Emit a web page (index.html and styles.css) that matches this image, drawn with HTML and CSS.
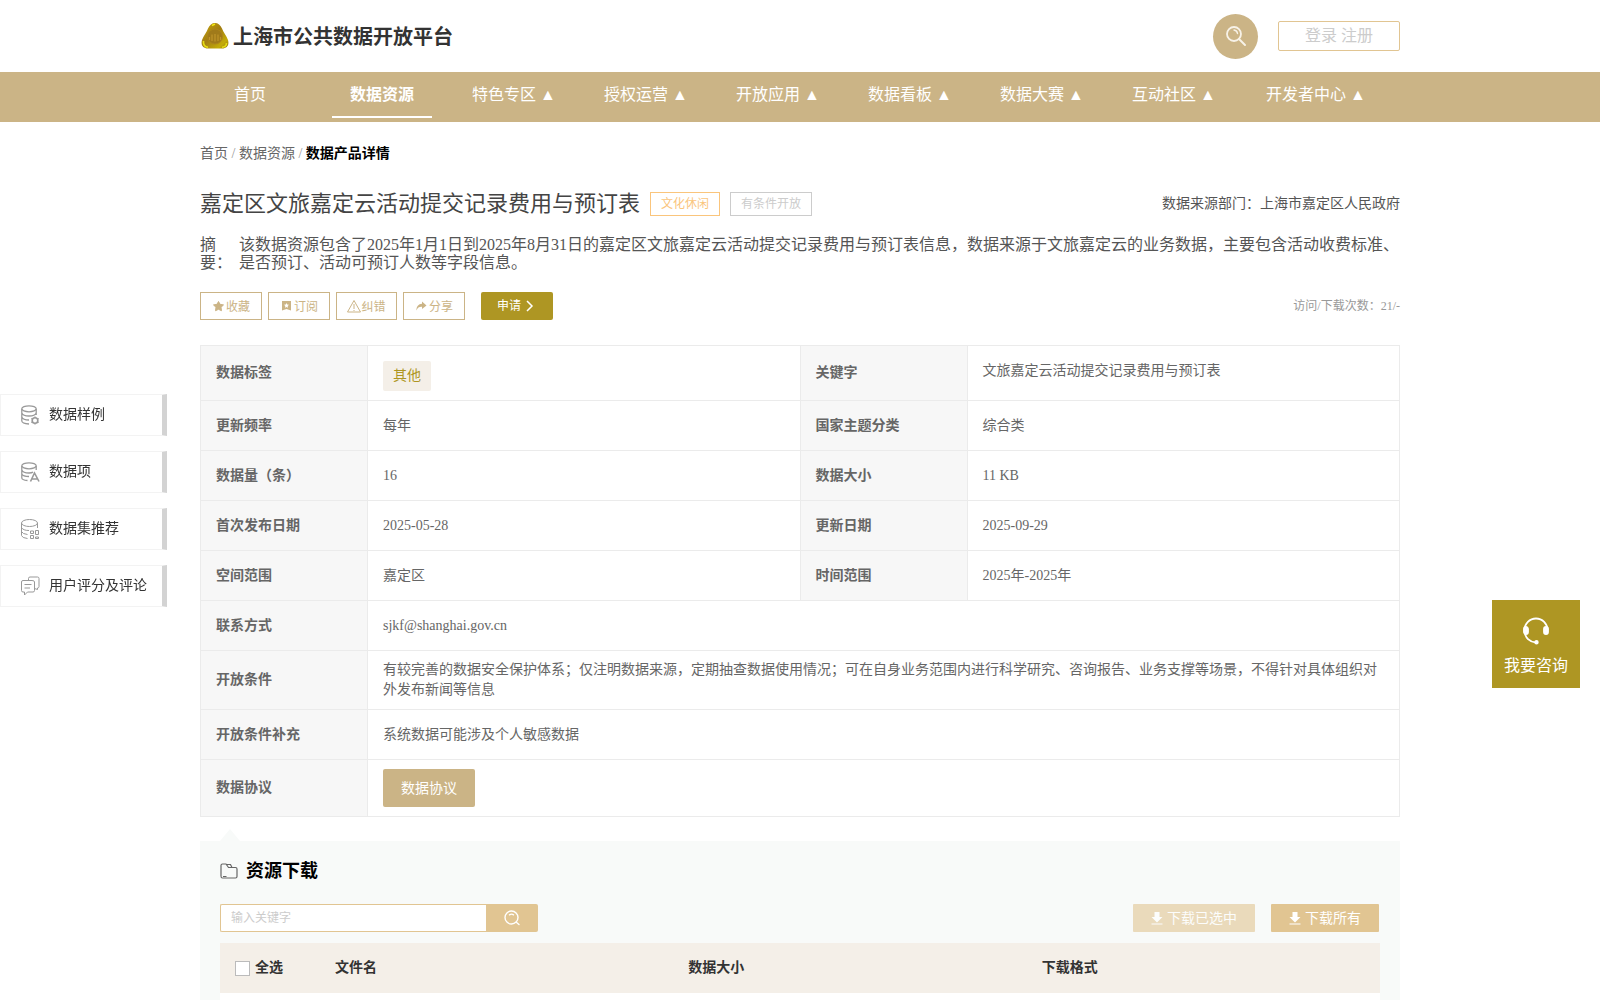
FILE: index.html
```html
<!DOCTYPE html>
<html lang="zh-CN">
<head>
    <meta charset="UTF-8">
    <meta name="viewport" content="width=device-width, initial-scale=1.0">
    <title>上海市公共数据开放平台</title>
    <link rel="stylesheet" href="styles.css">
</head>
<body>
    <header class="header container">
        <a class="logo" href="#">
            <svg class="logo-icon" width="28" height="26" viewBox="0 0 28 26">
                <defs>
                    <linearGradient id="gold" x1="0" y1="0" x2="1" y2="1">
                        <stop offset="0" stop-color="#c9a80c"/>
                        <stop offset="0.45" stop-color="#a27d12"/>
                        <stop offset="0.8" stop-color="#c4ac08"/>
                        <stop offset="1" stop-color="#8a6a10"/>
                    </linearGradient>
                </defs>
                <path d="M14 0C17 0 19.500 2 21 5.500C22.500 9.500 25.500 13 27 17C28.500 22 26 25.500 21 25.500H7C2 25.500-.5 22 1 17C2.500 13 5.500 9.500 7 5.500C8.500 2 11 0 14 0Z" fill="url(#gold)"/>
                <path d="M2.500 18C2 22 4 24 7 24.300M21 24.300C24 24 25.500 23 25.500 20" fill="none" stroke="#e6de12" stroke-width="1.600"/>
                <path d="M11 2.500L14 1.200" stroke="#f3ee12" stroke-width="1.400"/>
                <circle cx="14" cy="13.500" r="7.500" fill="#a07a1a" stroke="#ad861b"/>
                <path d="M8.500 17V14M11 18V11.500M14 18.500V11M17 18V11.500M19.500 17V14" stroke="#c0952a" stroke-width="1.200"/>
            </svg>
            <span>上海市公共数据开放平台</span>
        </a>
        <div class="header-right">
            <button class="search-round" aria-label="搜索">
                <svg width="22" height="22" viewBox="0 0 22 22" fill="none" stroke="#f7f2e8" stroke-linecap="round">
                    <circle cx="9" cy="9" r="7" stroke-width="1.800"/>
                    <path d="M9 5A4 4 0 0 1 12.500 8.500" stroke-width="1.400"/>
                    <path d="M14 14L20 20" stroke-width="2"/>
                </svg>
            </button>
            <div class="login"><a href="#">登录</a> <a href="#">注册</a></div>
        </div>
    </header>

    <nav class="nav">
        <div class="nav-list container">
            <a class="nav-item" href="#">首页</a>
            <a class="nav-item active" href="#">数据资源</a>
            <a class="nav-item" href="#">特色专区 ▲</a>
            <a class="nav-item" href="#">授权运营 ▲</a>
            <a class="nav-item" href="#">开放应用 ▲</a>
            <a class="nav-item" href="#">数据看板 ▲</a>
            <a class="nav-item" href="#">数据大赛 ▲</a>
            <a class="nav-item" href="#">互动社区 ▲</a>
            <a class="nav-item wide" href="#">开发者中心 ▲</a>
        </div>
    </nav>

    <main class="container">
        <div class="breadcrumb">
            <a href="#">首页</a> / <a href="#">数据资源</a> / <b>数据产品详情</b>
        </div>

        <div class="title-row">
            <h1>嘉定区文旅嘉定云活动提交记录费用与预订表</h1>
            <span class="tag tag-orange">文化休闲</span>
            <span class="tag">有条件开放</span>
            <span class="source">数据来源部门：上海市嘉定区人民政府</span>
        </div>

        <div class="summary">
            <span class="summary-label">摘要：</span>
            <p>该数据资源包含了2025年1月1日到2025年8月31日的嘉定区文旅嘉定云活动提交记录费用与预订表信息，数据来源于文旅嘉定云的业务数据，主要包含活动收费标准、是否预订、活动可预订人数等字段信息。</p>
        </div>

        <div class="actions">
            <button class="btn-line">
                <svg width="12" height="12" viewBox="0 0 12 12"><path d="M6.500 1.500L8 4.300L11.500 4.900L9 7.300L9.500 10.700L6.500 9.300L3.500 10.700L4 7.300L1.500 4.900L5 4.300Z" fill="#cbb486" stroke="#cbb486" stroke-linejoin="round"/></svg>
                收藏
            </button>
            <button class="btn-line">
                <svg width="12" height="12" viewBox="0 0 12 12"><path d="M2 1H11V10.500L6.500 9L2 10.500Z" fill="#cbb486"/><path d="M6.500 3L7.200 4.500L9 4.800L7.700 6L8 7.800L6.500 7L5 7.800L5.300 6L4 4.800L5.800 4.500Z" fill="#fff"/></svg>
                订阅
            </button>
            <button class="btn-line tight">
                <svg width="14" height="14" viewBox="0 0 14 14" fill="none" stroke="#cbb486"><path d="M7 1.500L13.500 13H.5Z" stroke-linejoin="round"/><path d="M7 5V10M7 11V12"/></svg>
                纠错
            </button>
            <button class="btn-line">
                <svg width="12" height="12" viewBox="0 0 12 12"><path d="M7 1.500L11.500 5.500L7 9V6.800C4.500 6.600 2.500 7.500 1.500 10.500C1.200 6.500 3.500 4 7 3.800Z" fill="#cbb486"/></svg>
                分享
            </button>
            <button class="btn-apply">
                <span>申请</span>
                <svg width="8" height="12" viewBox="0 0 8 12" fill="none" stroke="#fff" stroke-width="1.500"><path d="M1 1L6 6L1 11"/></svg>
            </button>
            <span class="visits">访问/下载次数：21/-</span>
        </div>

        <table class="info">
            <colgroup>
                <col class="col-label"><col><col class="col-label"><col>
            </colgroup>
            <tr>
                <th>数据标签</th><td><span class="label-pill">其他</span></td>
                <th>关键字</th><td><span class="keyword">文旅嘉定云活动提交记录费用与预订表</span></td>
            </tr>
            <tr><th>更新频率</th><td>每年</td><th>国家主题分类</th><td>综合类</td></tr>
            <tr><th>数据量（条）</th><td>16</td><th>数据大小</th><td>11 KB</td></tr>
            <tr><th>首次发布日期</th><td>2025-05-28</td><th>更新日期</th><td>2025-09-29</td></tr>
            <tr><th>空间范围</th><td>嘉定区</td><th>时间范围</th><td>2025年-2025年</td></tr>
            <tr><th>联系方式</th><td colspan="3">sjkf@shanghai.gov.cn</td></tr>
            <tr><th>开放条件</th><td colspan="3">有较完善的数据安全保护体系；仅注明数据来源，定期抽查数据使用情况；可在自身业务范围内进行科学研究、咨询报告、业务支撑等场景，不得针对具体组织对外发布新闻等信息</td></tr>
            <tr><th>开放条件补充</th><td colspan="3">系统数据可能涉及个人敏感数据</td></tr>
            <tr><th>数据协议</th><td colspan="3"><button class="btn-agreement">数据协议</button></td></tr>
        </table>

        <section class="download">
            <h2>
                <svg width="18" height="16" viewBox="0 0 18 16" fill="none" stroke="#666" stroke-width="1.200"><path d="M1 13V2.500Q1 1 2.500 1H6L8.500 4.500H15.500Q17 4.500 17 6V13.500Q17 15 15.500 15H2.500Q1 15 1 13M6 1.500H10.500L12 4.500M3 13.500H6.500"/></svg>
                资源下载
            </h2>
            <div class="toolbar">
                <div class="search-box">
                    <input type="text" placeholder="输入关键字" aria-label="输入关键字">
                    <button aria-label="搜索">
                        <svg width="16" height="16" viewBox="0 0 16 16" fill="none" stroke="#fff" stroke-width="1.400" stroke-linecap="round"><circle cx="7.500" cy="7.500" r="6.500"/><path d="M5.500 4.800Q7.500 3.500 9.500 4.800M12.300 12.300L15 14.500"/></svg>
                    </button>
                </div>
                <div class="download-btns">
                    <button class="btn-download" disabled>
                        <svg width="12" height="14" viewBox="0 0 12 14" fill="#fff"><path d="M3.500 1H8.500V6H11.500L6 11.500L.5 6H3.500ZM.5 12.500H11.500V13.500H.5Z"/></svg>
                        <span>下载已选中</span>
                    </button>
                    <button class="btn-download">
                        <svg width="12" height="14" viewBox="0 0 12 14" fill="#fff"><path d="M3.500 1H8.500V6H11.500L6 11.500L.5 6H3.500ZM.5 12.500H11.500V13.500H.5Z"/></svg>
                        <span>下载所有</span>
                    </button>
                </div>
            </div>
            <table class="files">
                <thead>
                    <tr>
                        <th class="col-check"><label><input type="checkbox">全选</label></th>
                        <th>文件名</th>
                        <th>数据大小</th>
                        <th>下载格式</th>
                    </tr>
                </thead>
                <tbody>
                    <tr><td></td><td></td><td></td><td></td></tr>
                </tbody>
            </table>
        </section>
    </main>

    <aside class="side-menu">
        <a href="#">
            <svg width="20" height="20" viewBox="0 0 20 20" fill="none" stroke="#999" stroke-width="1.300"><ellipse cx="9" cy="3.800" rx="7.200" ry="3"/><path d="M1.800 4V16Q2 18.500 9 19M16.200 4V10M1.800 8Q3 11 9 11Q15 11 16.200 8M1.800 12Q3 15 9 15"/><circle cx="15" cy="15.500" r="2.800" stroke-width="1.600"/><path d="M15 11.500V12.500M15 18.500V19.500M11.300 13.500L12.300 14M17.700 17L18.700 17.500M11.300 17.500L12.300 17M17.700 14L18.700 13.500"/></svg>
            数据样例
        </a>
        <a href="#">
            <svg width="20" height="20" viewBox="0 0 20 20" fill="none" stroke="#999" stroke-width="1.300"><ellipse cx="9" cy="3.800" rx="7.200" ry="3"/><path d="M1.800 4V16Q2 18 7.500 18.500M16.200 4V8M1.800 8Q3 11 9 11Q12 11 13 10M1.800 12Q3 14.500 9 14.500"/><path d="M10.500 19.500L14.500 11L19 19.500M12 17H17.500" stroke-width="1.600"/></svg>
            数据项
        </a>
        <a href="#">
            <svg width="20" height="20" viewBox="0 0 20 20" fill="none" stroke="#999"><ellipse cx="9.500" cy="4" rx="8" ry="3.500"/><path d="M1.500 4V16.500Q2 19 7.500 19.500M17.500 4V9M1.500 8.500Q3 11.500 9 11.500M1.500 12.500Q2.500 15 7.500 15.500"/><path d="M10.500 12H13.500V14.500H10.500ZM15.500 11.500H18.500V15.500H15.500ZM10.500 16.500H13.500V19.500H10.500ZM15.500 18H18.500V19.500H15.500Z"/></svg>
            数据集推荐
        </a>
        <a href="#">
            <svg width="20" height="20" viewBox="0 0 20 20" fill="none" stroke="#999"><path d="M3 4.500H12Q14.500 4.500 14.500 6V14.500Q14.500 16 13 16H7.500L4.500 19V16H3Q1.500 16 1.500 14.500V6Q1.500 4.500 3 4.500ZM8.500 4.500V2.500Q8.500 1 10 1H17.500Q19 1 19 2.500V10.500Q19 12 17.500 12V13.500L14.500 12.500M4.500 8.500H11.500M4.500 12H10"/></svg>
            用户评分及评论
        </a>
    </aside>

    <a class="consult" href="#">
        <svg width="28" height="28" viewBox="0 0 28 28" fill="none" stroke="#fff" stroke-width="1.800"><path d="M2.500 13A11.500 11.500 0 0 1 25.500 13M2.500 13C2.500 21 8 25 14 25.500"/><rect x="2" y="10" width="4" height="7" rx="2" fill="#fff"/><rect x="22" y="10" width="4" height="7" rx="2" fill="#fff"/><circle cx="14.500" cy="25.200" r="1.300" fill="#fff"/></svg>
        我要咨询
    </a>
</body>
</html>
```

FILE: styles.css
```css
* {
    box-sizing: border-box;
}
body {
    margin: 0;
    font-family: "Liberation Serif", "Noto Sans CJK SC", serif;
    font-size: 14px;
    line-height: 20px;
    color: #666;
    background-color: #fff;
}
a {
    color: inherit;
    text-decoration: none;
}
button, input {
    font-family: inherit;
    border: none;
    padding: 0;
    margin: 0;
}
button {
    cursor: pointer;
}
h1, h2, p {
    margin: 0;
}
svg {
    flex: none;
}
.container {
    width: 100%;
    max-width: 1200px;
    margin: 0 auto;
}

/* header */
.header {
    display: flex;
    justify-content: space-between;
    align-items: center;
    height: 72px;
}
.logo {
    display: flex;
    align-items: center;
    gap: 4px;
    padding-left: 1px;
    font-size: 20px;
    font-weight: bold;
    color: #333;
}
.logo span {
    padding-top: 2px;
}
.header-right {
    display: flex;
    align-items: center;
    gap: 20px;
}
.search-round {
    display: flex;
    justify-content: center;
    align-items: center;
    width: 45px;
    height: 45px;
    border-radius: 50%;
    background-color: #cbb486;
}
.login {
    width: 122px;
    border: 1px solid #e1c592;
    border-radius: 2px;
    font-size: 16px;
    line-height: 28px;
    text-align: center;
    color: #ccc;
}

/* nav */
.nav {
    height: 50px;
    background-color: #cbb486;
}
.nav-list {
    display: flex;
    gap: 32px;
}
.nav-item {
    width: 100px;
    height: 46px;
    border-bottom: 2px solid transparent;
    font-size: 16px;
    line-height: 46px;
    text-align: center;
    white-space: nowrap;
    color: #fff;
}
.nav-item.active {
    font-weight: bold;
    border-bottom-color: #fff;
}
.nav-item.wide {
    width: 120px;
}

/* title area */
.breadcrumb {
    padding-top: 22px;
    color: #999;
}
.breadcrumb a {
    color: #666;
}
.breadcrumb b {
    color: #000;
}
.title-row {
    display: flex;
    align-items: center;
    gap: 10px;
    margin-top: 25px;
}
h1 {
    font-size: 22px;
    line-height: 30px;
    font-weight: normal;
    color: #444;
}
.tag {
    padding: 0 10px;
    border: 1px solid #ccc;
    font-size: 12px;
    line-height: 22px;
    color: #ccc;
}
.tag-orange {
    border-color: #fac57c;
    color: #fac57c;
}
.source {
    margin-left: auto;
    color: #555;
}
.summary {
    display: flex;
    margin-top: 17px;
    font-size: 16px;
    line-height: 18px;
    color: #555;
}
.summary-label {
    flex: none;
    width: 39px;
}
.actions {
    display: flex;
    align-items: center;
    margin-top: 20px;
}
.btn-line {
    display: flex;
    justify-content: center;
    align-items: center;
    gap: 2px;
    width: 62px;
    height: 28px;
    margin-right: 6px;
    border: 1px solid #cbb486;
    background-color: #fff;
    font-size: 12px;
    color: #cbb486;
}
.btn-line.tight {
    gap: 0;
    width: 61px;
}
.btn-apply {
    display: flex;
    align-items: center;
    gap: 5px;
    width: 72px;
    height: 28px;
    margin-left: 10px;
    padding-left: 16px;
    border-radius: 2px;
    background-color: #ae9623;
    font-size: 12px;
    color: #fff;
}
.btn-apply span, .btn-download span {
    padding-bottom: 3px;
}
.visits {
    margin-left: auto;
    font-size: 12px;
    color: #999;
}

/* info table */
.info {
    width: 100%;
    margin-top: 25px;
    border-collapse: collapse;
    table-layout: fixed;
}
.col-label {
    width: 167px;
}
.info th, .info td {
    height: 50px;
    padding: 9px 15px;
    border: 1px solid #ebebeb;
    text-align: left;
}
.info th {
    background-color: #f7f7f7;
}
.label-pill {
    display: inline-block;
    margin-top: 6px;
    padding: 0 10px;
    border-radius: 2px;
    background-color: #f4efe8;
    line-height: 30px;
    vertical-align: top;
    color: #ae9623;
}
.keyword {
    display: inline-block;
    padding-bottom: 5px;
    vertical-align: top;
}
.btn-agreement {
    display: block;
    height: 38px;
    padding: 0 18px 2px;
    border-radius: 2px;
    background-color: #cbb486;
    font-size: 14px;
    color: #fff;
}

/* download */
.download {
    position: relative;
    margin-top: 24px;
    padding: 18px 20px 20px;
    background-color: #f8faf9;
}
.download::before {
    content: "";
    position: absolute;
    top: -12px;
    left: 20px;
    border: 10px solid transparent;
    border-top: none;
    border-bottom: 12px solid #f8faf9;
}
h2 {
    display: flex;
    align-items: center;
    gap: 8px;
    font-size: 18px;
    line-height: 24px;
    color: #000;
}
.toolbar {
    display: flex;
    justify-content: space-between;
    margin-top: 21px;
    padding-right: 1px;
}
.search-box {
    display: flex;
    height: 28px;
}
.search-box input {
    width: 266px;
    padding: 0 10px;
    border: 1px solid #e1c592;
    border-right: none;
    border-radius: 2px 0 0 2px;
    font-size: 12px;
}
.search-box input::placeholder {
    color: #ccc;
}
.search-box button {
    display: flex;
    justify-content: center;
    align-items: center;
    width: 52px;
    border-radius: 0 2px 2px 0;
    background-color: #e1c592;
}
.download-btns {
    display: flex;
    gap: 16px;
}
.btn-download {
    display: flex;
    align-items: center;
    gap: 4px;
    height: 28px;
    padding: 0 18px;
    border-radius: 1px;
    background-color: #e1c592;
    font-size: 14px;
    color: #fff;
}
.btn-download:disabled {
    opacity: 0.6;
}
.files {
    width: 100%;
    margin-top: 11px;
    border-collapse: collapse;
    table-layout: fixed;
    background-color: #fff;
}
.files th, .files td {
    height: 50px;
    padding: 0 15px;
    text-align: left;
}
.files th {
    background-color: #f4efe8;
    color: #333;
}
.files .col-check {
    width: 100px;
}
.files label {
    display: flex;
    align-items: center;
    gap: 5px;
}
.files input {
    appearance: none;
    width: 15px;
    height: 15px;
    border: 1px solid #bbb;
    background-color: #fff;
}

/* floating menus */
.side-menu {
    position: fixed;
    top: 394px;
    left: 0;
    display: flex;
    flex-direction: column;
    gap: 15px;
}
.side-menu a {
    display: flex;
    align-items: center;
    gap: 9px;
    width: 167px;
    height: 42px;
    padding-left: 19px;
    border: 1px solid #f3f3f3;
    border-right: 5px solid #d3d3d3;
    color: #333;
}
.consult {
    position: fixed;
    right: 20px;
    top: 600px;
    display: flex;
    flex-direction: column;
    align-items: center;
    gap: 11px;
    width: 88px;
    height: 88px;
    padding-top: 17px;
    background-color: #ae9623;
    font-size: 16px;
    color: #fff;
}
```
